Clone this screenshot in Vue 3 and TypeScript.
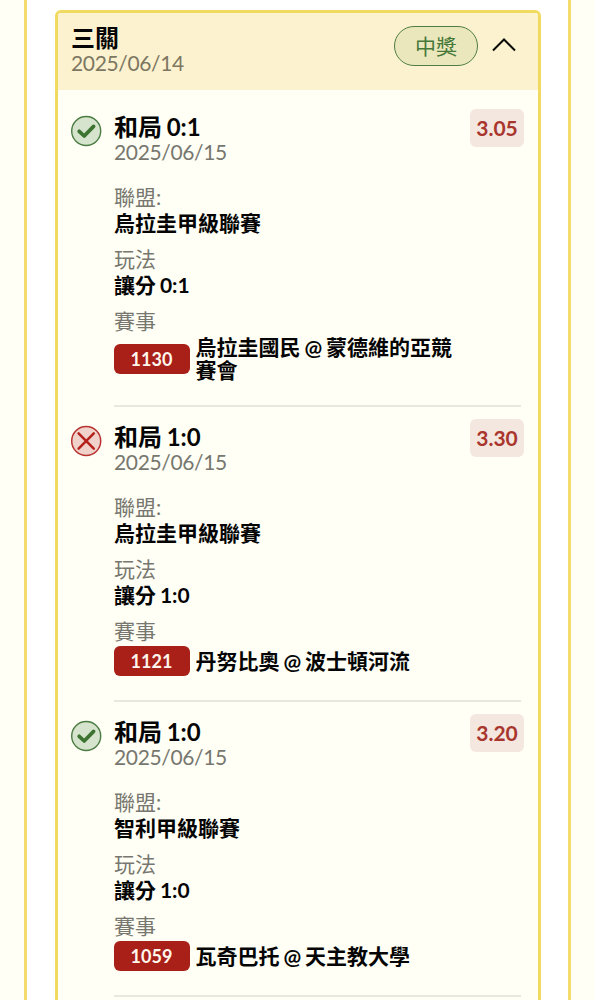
<script setup lang="ts">
interface Leg {
  won: boolean
  pick: string
  date: string
  odds: string
  league: string
  play: string
  code: string
  match: string
}

const legs: Leg[] = [
  { won: true, pick: '和局 0:1', date: '2025/06/15', odds: '3.05', league: '烏拉圭甲級聯賽', play: '讓分 0:1', code: '1130', match: '烏拉圭國民 @ 蒙德維的亞競賽會' },
  { won: false, pick: '和局 1:0', date: '2025/06/15', odds: '3.30', league: '烏拉圭甲級聯賽', play: '讓分 1:0', code: '1121', match: '丹努比奧 @ 波士頓河流' },
  { won: true, pick: '和局 1:0', date: '2025/06/15', odds: '3.20', league: '智利甲級聯賽', play: '讓分 1:0', code: '1059', match: '瓦奇巴托 @ 天主教大學' },
]
</script>

<template>
  <main class="page">
    <section class="panel">
      <article class="card">
        <header class="head">
          <div class="head-text">
            <h1 class="title">三關</h1>
            <p class="date head-date">2025/06/14</p>
          </div>
          <span class="pill">中獎</span>
          <svg class="chevron" width="26" height="16" viewBox="0 0 26 16" fill="none">
            <path d="M2 13.5 L13 2.5 L24 13.5" stroke="#0b0b08" stroke-width="2" />
          </svg>
        </header>
        <div class="legs">
          <div v-for="leg in legs" :key="leg.code" class="leg">
            <svg v-if="leg.won" class="status" width="32" height="32" viewBox="0 0 32 32" fill="none">
              <circle cx="16.2" cy="16" r="14.5" fill="#d6e3cd" stroke="#4b7d43" stroke-width="1.4" />
              <path d="M9.2 16.3 L14.2 21 L23.6 11.4" stroke="#3d7431" stroke-width="3.7" stroke-linecap="round" stroke-linejoin="round" />
            </svg>
            <svg v-else class="status" width="32" height="32" viewBox="0 0 32 32" fill="none">
              <circle cx="16.2" cy="16" r="14.5" fill="#f0d2cb" stroke="#b83230" stroke-width="1.5" />
              <path d="M8.6 8.4 L23.8 23.6 M23.8 8.4 L8.6 23.6" stroke="#b3211a" stroke-width="2.5" stroke-linecap="round" />
            </svg>
            <div class="body">
              <div class="summary">
                <div>
                  <h2 class="title">{{ leg.pick }}</h2>
                  <p class="date">{{ leg.date }}</p>
                </div>
                <span class="odds">{{ leg.odds }}</span>
              </div>
              <dl class="fields">
                <div>
                  <dt>聯盟:</dt>
                  <dd>{{ leg.league }}</dd>
                </div>
                <div>
                  <dt>玩法</dt>
                  <dd>{{ leg.play }}</dd>
                </div>
                <div>
                  <dt>賽事</dt>
                  <dd class="match">
                    <span class="code">{{ leg.code }}</span>
                    <span class="teams">{{ leg.match }}</span>
                  </dd>
                </div>
              </dl>
            </div>
          </div>
          <hr class="end" />
        </div>
      </article>
    </section>
  </main>
</template>

<style>
body {
  background: #fffff6;
}
</style>

<style scoped>
* {
  box-sizing: border-box;
  margin: 0;
}
.page {
  height: 1000px;
  overflow: hidden;
  padding: 0 24px;
  background: #fffff6;
  font-family: Lato, 'Noto Sans CJK TC', sans-serif;
  font-size: 21px;
  line-height: 26px;
  color: #050505;
}
.panel {
  height: 1100px;
  padding: 10px 27px 0 28px;
  background: #fff;
  border: solid #f3db6c;
  border-width: 0 3px;
}
.card {
  height: 1090px;
  border: 3px solid #f1da60;
  border-radius: 6px;
  background: #fffff6;
  overflow: hidden;
}
.head {
  display: flex;
  align-items: flex-start;
  height: 77px;
  padding: 12px 20px 0 13px;
  background: #fcf2cf;
}
.head-text {
  flex: 1;
}
.title {
  font-size: 24px;
  line-height: 26px;
  font-weight: 700;
  word-spacing: -1.2px;
}
.date {
  height: 26px;
  line-height: 24px;
  letter-spacing: -0.35px;
  color: #77776f;
  white-space: nowrap;
}
.head-date {
  color: #7d7762;
}
.pill {
  width: 84px;
  height: 40px;
  margin-top: 1px;
  border: 1.5px solid #4d7d42;
  border-radius: 20px;
  background: #eae7bd;
  color: #457839;
  text-align: center;
  line-height: 38px;
}
.chevron {
  margin: 12px 1px 0 13px;
}
.legs {
  padding-top: 5px;
}
.leg {
  display: flex;
  padding: 0 15px 0 12px;
}
.status {
  flex: none;
  margin: 20px 12px 0 0;
}
.body {
  flex: 1;
  padding-bottom: 24px;
}
.leg + .leg .summary {
  border-top-color: #e8e8e1;
}
.summary {
  display: flex;
  justify-content: space-between;
  height: 71px;
  margin-right: 2px;
  padding-top: 17px;
  border-top: 2px solid transparent;
}
.odds {
  width: 54px;
  height: 38px;
  margin: -5px -3px 0 0;
  border-radius: 6px;
  background: #f4e7e0;
  color: #a9362d;
  font-size: 21px;
  font-weight: 700;
  line-height: 38px;
  text-align: center;
}
.fields {
  display: flex;
  flex-direction: column;
  gap: 10px;
  padding-top: 18px;
}
dt {
  color: #77776f;
}
dd {
  font-weight: 700;
  word-spacing: -1.2px;
}
.match {
  display: flex;
  align-items: center;
  gap: 6px;
  margin-top: 2px;
}
.code {
  flex: none;
  width: 76px;
  height: 30px;
  margin-left: -0.5px;
  border-radius: 6px;
  background: #a82018;
  color: #fff6ec;
  font-size: 18px;
  line-height: 30px;
  text-align: center;
}
.teams {
  width: 265px;
  line-height: 22.5px;
}
.end {
  height: 2px;
  margin: 0 17px 0 56px;
  border: 0;
  background: #e8e8e1;
}
</style>
